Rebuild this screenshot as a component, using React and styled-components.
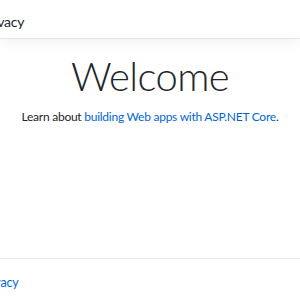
import styled, { createGlobalStyle } from 'styled-components'

const GlobalStyle = createGlobalStyle`
  html, body {
    margin: 0;
    padding: 0;
    background: #ffffff;
  }
  body {
    font-family: Lato, 'Open Sans', Arial, sans-serif;
    color: #212529;
    overflow: hidden;
  }
`

export default function App() {
  return (
    <Page>
      <GlobalStyle />
      <Header>
        <NavLink>Privacy</NavLink>
      </Header>
      <Main>
        <Title>Welcome</Title>
        <Lead>
          Learn about <Link>building Web apps with ASP.NET Core</Link>.
        </Lead>
      </Main>
      <Footer>
        <FooterLink>Privacy</FooterLink>
      </Footer>
    </Page>
  )
}

const Page = styled.div`
  width: 300px;
  height: 300px;
  display: flex;
  flex-direction: column;
  overflow: hidden;
`

const Header = styled.header`
  height: 38px;
  flex-shrink: 0;
  display: flex;
  align-items: center;
  border-bottom: 1px solid #e5e5e5;
  box-shadow: 0 4px 12px rgba(0, 0, 0, 0.05);
`

const NavLink = styled.span`
  margin-left: -19px;
  margin-top: 4px;
  font-size: 14px;
  letter-spacing: -0.2px;
  color: #212529;
`

const Main = styled.main`
  flex: 1;
  display: flex;
  flex-direction: column;
  align-items: center;
  padding-top: 13px;
`

const Title = styled.h1`
  margin: 0;
  font-size: 40px;
  font-weight: 300;
  letter-spacing: -0.6px;
  line-height: 1.2;
  color: #212529;
`

const Lead = styled.p`
  margin: 9px 0 0;
  font-size: 12px;
  letter-spacing: -0.25px;
  white-space: nowrap;
`

const Link = styled.a`
  color: #0366d6;
  text-decoration: none;
`

const Footer = styled.footer`
  height: 41px;
  flex-shrink: 0;
  border-top: 1px solid #e5e5e5;
  display: flex;
  align-items: center;
`

const FooterLink = styled.a`
  margin-left: -20px;
  margin-top: 6px;
  font-size: 12.5px;
  letter-spacing: -0.2px;
  color: #0366d6;
`
